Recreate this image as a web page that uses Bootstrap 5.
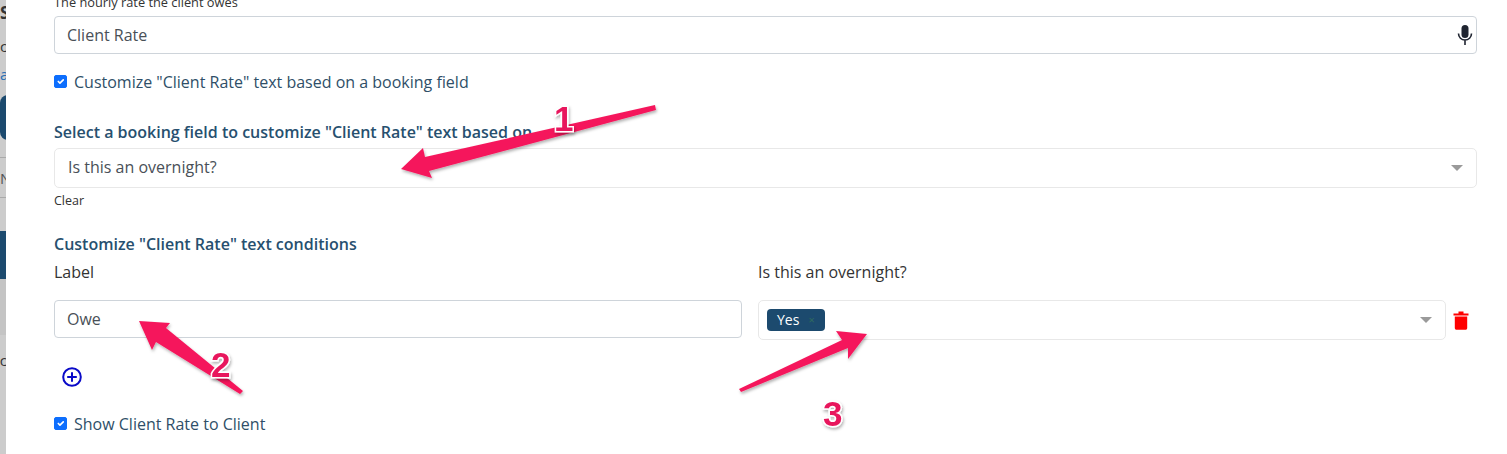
<!DOCTYPE html>
<html lang="en">
  <head>
    <meta charset="UTF-8" />
    <meta name="viewport" content="width=device-width, initial-scale=1.0" />
    <title>Client Rate</title>
    <link href="https://cdn.jsdelivr.net/npm/bootstrap@5.3.6/dist/css/bootstrap.min.css" rel="stylesheet" />
    <style>
      html, body { height: 454px; overflow: hidden; }
      body { font-family: "Open Sans", "Liberation Sans", sans-serif; font-size: 16px; color: #212529; background: #fff; }
      .page-wrap { height: 454px; position: relative; }

      /* bit of the page behind the modal */
      .backdrop-strip { width: 6px; flex: none; background: #ccc; overflow: hidden; color: #333; white-space: nowrap; font-size: 15px; line-height: 20px; }
      .strip-s { margin-top: 3px; font-weight: 700; font-size: 17px; }
      .strip-c { margin-top: 13px; }
      .strip-a { margin-top: 8px; color: #2a6fb5; }
      .strip-btn { margin-top: 11px; height: 45px; width: 20px; background: #1c4a6e; border-radius: 8px; }
      .strip-line1 { margin-top: 17px; border-top: 1px solid #aaa; height: 11px; }
      .strip-n { color: #555; height: 29px; }
      .strip-line2 { border-top: 1px solid #aaa; height: 34px; }
      .strip-band { height: 48px; background: #1c4a6e; }
      .strip-grey { height: 56px; background: #c4c4c4; }
      .strip-i { margin-top: 15px; margin-left: -4px; }

      .form-area { width: 1423px; margin-left: 48px; }
      .hint-top { font-size: 12.8px; line-height: 16px; height: 16px; position: relative; top: -6px; color: #333; }
      .rate-input { height: 38px; border: 1px solid #ced4da; border-radius: 4px; padding: 0 12px; color: #495057; font-size: 16px; line-height: 36px; }
      .rate-input:focus { box-shadow: none; border-color: #ced4da; }
      .mic-icon { position: absolute; right: 3px; top: 9px; width: 18px; height: 20px; }
      .field-wrap { position: relative; }
      .check-row { min-height: 0; margin: 0; padding: 0; color: #2f4f68; line-height: 22px; gap: 7px; }
      .check-row .form-check-input { float: none; margin: 0; width: 13px; height: 13px; border-radius: 2px; flex: none; position: relative; top: -1px; }
      .check-one { margin-top: 17px; }
      .section-label { font-weight: 600; color: #27506f; font-size: 16px; line-height: 22px; margin: 0; }
      .label-select { margin-top: 28px; }
      .pick-box { height: 40px; border: 1px solid #e8e8e8; border-radius: 5px; padding: 0 13px 2px; color: #495057; background: #fff; }
      .pick-top { margin-top: 5px; }
      .pick-arrow { width: 0; height: 0; border-left: 6px solid transparent; border-right: 6px solid transparent; border-top: 6px solid #9a9a9a; margin-top: 2px; }
      .clear-link { font-size: 12.5px; line-height: 16px; margin-top: 5px; color: #333; }
      .label-cond { margin-top: 24px; }
      .cond-head { margin-top: 6px; line-height: 22px; color: #333; }
      .cond-left { width: 688px; flex: none; }
      .cond-right { width: 688px; flex: none; margin-left: 16px; }
      .cond-fields { margin-top: 17px; }
      .yes-tag { background: #1c4a6e; color: #fff; font-size: 14px; line-height: 22px; border-radius: 4px; padding: 0 10px; gap: 9px; margin: 2px 0 0 -5px; }
      .yes-x { color: #2f6b5e; font-size: 11px; }
      .trash-icon { width: 16px; height: 20px; margin-left: 7px; }
      .plus-icon { display: block; width: 20px; height: 20px; margin: 27px 0 0 8px; }
      .check-two { margin-top: 26px; }

      .note-layer { position: absolute; left: 0; top: 0; width: 1507px; height: 454px; pointer-events: none; }
      .note-num { font-family: "Liberation Sans", sans-serif; font-weight: 700; font-size: 35px; fill: #e8175d; stroke: #fff; stroke-width: 3px; paint-order: stroke; }
    </style>
  </head>
  <body>
    <div class="page-wrap d-flex">
      <div class="backdrop-strip">
        <div class="strip-s">S</div>
        <div class="strip-c">c</div>
        <div class="strip-a">a</div>
        <div class="strip-btn"></div>
        <div class="strip-line1"></div>
        <div class="strip-n">N</div>
        <div class="strip-line2"></div>
        <div class="strip-band"></div>
        <div class="strip-grey"></div>
        <div class="strip-i">ic</div>
      </div>

      <form class="form-area">
        <div class="hint-top">The hourly rate the client owes</div>
        <div class="field-wrap">
          <input type="text" class="form-control rate-input" value="Client Rate" />
          <svg class="mic-icon" viewBox="0 0 18 20" aria-hidden="true">
            <rect x="5.5" y="0" width="7" height="13" rx="3.5" fill="#1f2430" />
            <path d="M2.5 8.5c0 4 3 6.5 6.5 6.5s6.5-2.5 6.5-6.5M9 15v5" fill="none" stroke="#1f2430" stroke-width="1.6" />
          </svg>
        </div>

        <label class="form-check d-flex align-items-center check-row check-one">
          <input class="form-check-input" type="checkbox" checked />
          <span>Customize "Client Rate" text based on a booking field</span>
        </label>

        <p class="section-label label-select">Select a booking field to customize "Client Rate" text based on</p>
        <div class="pick-box pick-top d-flex align-items-center justify-content-between">
          <span>Is this an overnight?</span>
          <span class="pick-arrow"></span>
        </div>
        <div class="clear-link">Clear</div>

        <p class="section-label label-cond">Customize "Client Rate" text conditions</p>
        <div class="d-flex cond-head">
          <div class="cond-left">Label</div>
          <div class="cond-right">Is this an overnight?</div>
        </div>
        <div class="d-flex align-items-start cond-fields">
          <div class="cond-left">
            <input type="text" class="form-control rate-input" value="Owe" />
          </div>
          <div class="cond-right pick-box d-flex align-items-center justify-content-between">
            <span class="yes-tag d-inline-flex align-items-center">Yes <span class="yes-x">×</span></span>
            <span class="pick-arrow"></span>
          </div>
          <svg class="trash-icon align-self-center" viewBox="0 0 16 20" aria-hidden="true">
            <path d="M0.5 3.5h15v2h-15zM5.5 3.5V1.5h5v2z" fill="#f00" />
            <path d="M1.8 6.5h12.4v11.5c0 1-.8 1.8-1.8 1.8H3.6c-1 0-1.8-.8-1.8-1.8z" fill="#f00" />
          </svg>
        </div>

        <svg class="plus-icon" viewBox="0 0 20 20" aria-hidden="true">
          <circle cx="10" cy="10" r="8.8" fill="none" stroke="#0a0ac8" stroke-width="2" />
          <path d="M10 5.2v9.6M5.2 10h9.6" stroke="#0a0ac8" stroke-width="2" />
        </svg>

        <label class="form-check d-flex align-items-center check-row check-two">
          <input class="form-check-input" type="checkbox" checked />
          <span>Show Client Rate to Client</span>
        </label>
      </form>

      <!-- screenshot annotations drawn over the form -->
      <svg class="note-layer" viewBox="0 0 1507 454" aria-hidden="true">
        <defs>
          <filter id="noteShadow" x="-15%" y="-30%" width="130%" height="170%">
            <feDropShadow dx="1" dy="2" stdDeviation="1.5" flood-color="#000" flood-opacity="0.3" />
          </filter>
        </defs>
        <g fill="#f5185c" filter="url(#noteShadow)">
          <polygon points="655,105 425,157 423,148 401,169 432,178 429,171 656,110" />
          <polygon points="243,391 166,328 170,323 139,321 152,350 156,342 240,394" />
          <polygon points="739,389 842,340 836,331 867,334 848,359 848,348 741,392" />
        </g>
        <g filter="url(#noteShadow)">
          <text class="note-num" x="554" y="131">1</text>
          <text class="note-num" x="211" y="377">2</text>
          <text class="note-num" x="823" y="426">3</text>
        </g>
      </svg>
    </div>
  </body>
</html>
